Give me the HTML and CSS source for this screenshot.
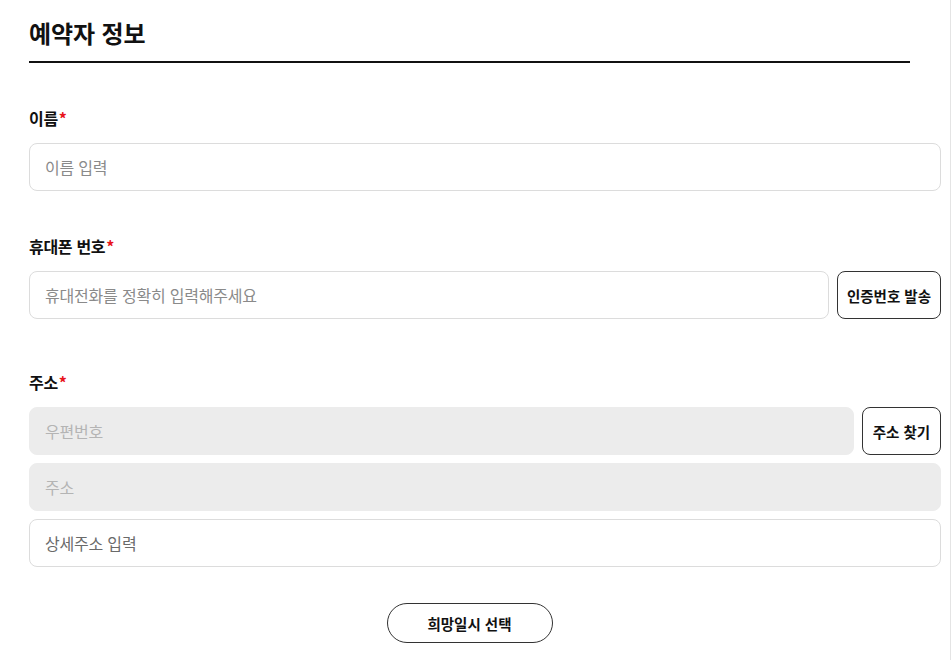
FILE: index.html
```html
<!DOCTYPE html>
<html lang="ko">
<head>
<meta charset="utf-8">
<title>예약자 정보</title>
<link rel="stylesheet" href="styles.css">
</head>
<body>
<div class="page">
  <div class="form">
    <h2 class="title">예약자 정보</h2>

    <div class="field field-name">
      <label class="label">이름<span class="req">*</span></label>
      <div class="input">이름 입력</div>
    </div>

    <div class="field field-phone">
      <label class="label">휴대폰 번호<span class="req">*</span></label>
      <div class="row">
        <div class="input grow">휴대전화를 정확히 입력해주세요</div>
        <button class="btn btn-verify">인증번호 발송</button>
      </div>
    </div>

    <div class="field field-addr">
      <label class="label">주소<span class="req">*</span></label>
      <div class="stack">
        <div class="row">
          <div class="input grow disabled">우편번호</div>
          <button class="btn btn-find">주소 찾기</button>
        </div>
        <div class="input disabled">주소</div>
        <div class="input detail">상세주소 입력</div>
      </div>
    </div>

    <div class="actions">
      <button class="btn-pill">희망일시 선택</button>
    </div>
  </div>
</div>
</body>
</html>
```

FILE: styles.css
```css
* { box-sizing: border-box; }
html, body { margin: 0; padding: 0; background: #fff; }
body {
  font-family: "Noto Sans CJK KR", "Noto Sans", sans-serif;
  color: #111;
}
.page {
  width: 951px;
  min-height: 660px;
  border-right: 1px solid #e4e4e4;
  padding: 16px 0 0 29px;
}
.form { width: 912px; }
.title {
  width: 881px;
  margin: 0;
  font-size: 24px;
  line-height: 34px;
  font-weight: 700;
  letter-spacing: -0.1px;
  padding-bottom: 11px;
  border-bottom: 2px solid #111;
}
.field { display: flex; flex-direction: column; }
.field-name { margin-top: 43px; }
.field-phone { margin-top: 43px; }
.field-addr { margin-top: 51px; }
.label {
  font-size: 16px;
  line-height: 24px;
  font-weight: 700;
  letter-spacing: -0.3px;
  margin-bottom: 13px;
}
.req { color: #e8141c; margin-left: 1px; }
.row { display: flex; gap: 8px; }
.stack { display: flex; flex-direction: column; gap: 8px; }
.input {
  height: 48px;
  border: 1px solid #dcdcdc;
  border-radius: 8px;
  padding: 0 15px;
  display: flex;
  align-items: center;
  font-size: 16px;
  letter-spacing: -0.2px;
  color: #8a8a8a;
  background: #fff;
}
.grow { flex: 1; }
.input.disabled { background: #ececec; border-color: #ececec; color: #b4b4b4; }
.input.detail { color: #6a6a6a; }
.btn {
  height: 48px;
  border: 1px solid #333;
  border-radius: 8px;
  background: #fff;
  font-family: inherit;
  font-size: 14.5px;
  font-weight: 700;
  letter-spacing: 0;
  color: #111;
  padding: 0;
}
.btn-verify { width: 104px; }
.btn-find { width: 79px; }
.actions {
  width: 881px;
  display: flex;
  justify-content: center;
  margin-top: 36px;
}
.btn-pill {
  width: 166px;
  height: 40px;
  border: 1px solid #333;
  border-radius: 20px;
  background: #fff;
  font-family: inherit;
  font-size: 14.5px;
  font-weight: 700;
  letter-spacing: 0;
  color: #111;
}
```
